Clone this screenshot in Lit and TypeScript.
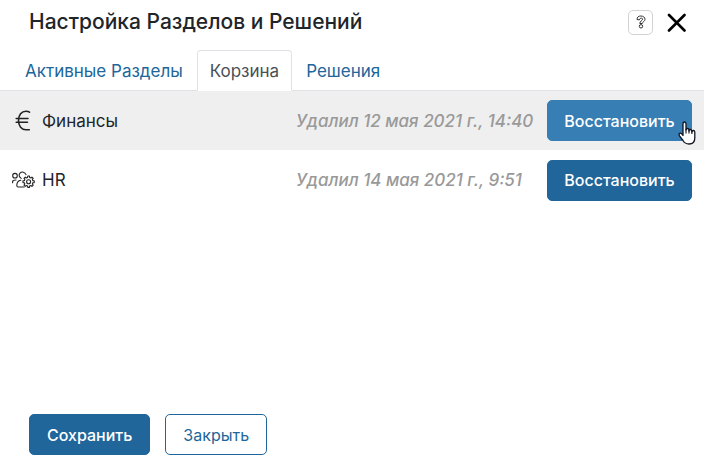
import { LitElement, html, svg, css } from "lit";
import { customElement, state } from "lit/decorators.js";
import { classMap } from "lit/directives/class-map.js";

interface Removed {
  icon: "euro" | "team";
  name: string;
  note: string;
}

/** Closed outline of a cog with rounded teeth. */
function cog(cx: number, cy: number, outer: number, inner: number, teeth: number): string {
  const step = (Math.PI * 2) / teeth;
  const at = (r: number, a: number) => `${(cx + r * Math.sin(a)).toFixed(2)} ${(cy - r * Math.cos(a)).toFixed(2)}`;
  const parts: string[] = [];
  for (let i = 0; i < teeth; i++) {
    const a = i * step;
    parts.push(at(inner, a - step * 0.3), at(outer, a - step * 0.2), at(outer, a + step * 0.2), at(inner, a + step * 0.3));
  }
  return `M${parts.join("L")}Z`;
}

const euro = svg`<path d="M17.500 3.200C16.500 2.500 15.300 2.300 14 2.300C9.500 2.300 6.500 6 6.500 11.500S9.500 20.700 14 20.700H17.300M4.200 9.500H16M4.200 13.300H15.500" fill="none" stroke="currentColor" stroke-width="1.600" stroke-linecap="round"/>`;

const team = svg`<g fill="none" stroke="currentColor" stroke-width="1.100" stroke-linecap="round" stroke-linejoin="round">
  <circle cx="3" cy="7.700" r="2.300"/>
  <path d="M.600 14.800V13.800C.600 12.300 1.600 12 4 12"/>
  <path d="M9.200 10.400C7 9 6.500 7 8 5.200C9.900 3.200 13 4 14 6.600"/>
  <path d="M8.800 12.300C6 12.700 4.800 14.500 4.800 17.500Q4.800 19 6.200 19H12.200"/>
  <path d=${cog(16.6, 13.7, 5.7, 4.4, 8)}/>
  <circle cx="16.600" cy="13.700" r="2"/>
</g>`;

@customElement("app-root")
export class AppRoot extends LitElement {
  static styles = css`
    :host {
      display: flex;
      flex-direction: column;
      min-height: 100vh;
      box-sizing: border-box;
      background: #fff;
      color: #212529;
      font: 17px/24px Inter, "Liberation Sans", sans-serif;
    }
    * { box-sizing: border-box; }
    svg { display: block; flex: none; }
    header {
      display: flex;
      align-items: center;
      justify-content: space-between;
      height: 50px;
      padding: 0 16px 6px 29px;
    }
    h1 { margin: 0; font-size: 21px; line-height: 28px; font-weight: 500; }
    .tools { display: flex; align-items: center; gap: 13px; }
    button { font: inherit; cursor: pointer; }
    .help, .close { display: grid; place-items: center; padding: 0; background: none; }
    .help { width: 25px; height: 25px; border: 1px solid #d2d2d2; border-radius: 5px; color: #333; }
    .close { width: 22px; height: 24px; border: 0; color: #000; }
    nav { display: flex; gap: 1px; padding: 0 12px; border-bottom: 1px solid #dee2e6; }
    nav a {
      height: 41px;
      margin-bottom: -1px;
      padding: 8px 12px;
      border: 1px solid transparent;
      border-radius: 4px 4px 0 0;
      color: #20669b;
      text-decoration: none;
    }
    nav .active { color: #495057; background: #fff; border-color: #dee2e6 #dee2e6 #fff; }
    ul { list-style: none; margin: 0; padding: 0; flex: 1; }
    li { display: flex; align-items: center; height: 60px; padding: 0 12px; }
    li.hovered { background: #efefef; height: 59px; }
    .icon { width: 30px; color: #222; }
    .name { flex: 1; }
    .note { width: 251px; color: #999; font-style: italic; font-weight: 500; }
    .btn {
      height: 41px;
      padding: 0 17px;
      border: 1px solid #20669b;
      border-radius: 5px;
      background: #20669b;
      color: #fff;
      font-size: 16px;
      font-weight: 500;
    }
    .restore { position: relative; width: 145px; padding: 0; }
    .hovered .restore { background: #377eb4; border-color: #377eb4; }
    .pointer { position: absolute; right: -5px; bottom: -5px; }
    footer { display: flex; gap: 15px; padding: 0 29px 7px; }
    .outline { background: #fff; color: #20669b; font-weight: 400; }
  `;

  @state() private tab = 1;
  private tabs = ["Активные Разделы", "Корзина", "Решения"];
  private items: Removed[] = [
    { icon: "euro", name: "Финансы", note: "Удалил 12 мая 2021 г., 14:40" },
    { icon: "team", name: "HR", note: "Удалил 14 мая 2021 г., 9:51" },
  ];

  private select(event: Event, index: number) {
    event.preventDefault();
    this.tab = index;
  }

  private pointer() {
    return html`<svg class="pointer" width="18" height="24" viewBox="0 0 18 24" aria-hidden="true">
      <path d="M5 14.500V3Q5 1 6.500 1T8 3V9Q8 7.500 9.500 7.500T11 9V10Q11 8.500 12.300 8.500T13.800 10V11Q14 9.500 15.300 9.500T16.800 11V17Q16.800 23 11 23Q7 23 5 19.500L1.500 14.800Q.5 13 1.800 12.300T5 14.500Z" fill="#fff" stroke="#111322" stroke-width="1.300" stroke-linejoin="round"/>
      <path d="M8 8V12.500M11 9V12.500M13.900 10V13" stroke="#111322" stroke-width="1.100"/>
    </svg>`;
  }

  render() {
    return html`
      <header>
        <h1>Настройка Разделов и Решений</h1>
        <div class="tools">
          <button class="help" aria-label="Справка">
            <svg width="12" height="14" viewBox="0 0 12 14" fill="none" stroke="currentColor" stroke-width="1">
              <path d="M2 4.500C2 2 3.600 1 5.900 1S10 2.300 10 4.300C10 6.500 7.500 6.700 7.300 8.500H4.800C4.800 6 7.600 5.700 7.600 4.200C7.600 2.700 4.600 2.800 4.300 4.900Z"/>
              <circle cx="6" cy="11.300" r="1.700"/>
            </svg>
          </button>
          <button class="close" aria-label="Закрыть окно">
            <svg width="20" height="20" viewBox="0 0 20 20"><path d="M2 3L17.500 18.500M17.500 3L2 18.500" stroke="currentColor" stroke-width="2.600" stroke-linecap="round"/></svg>
          </button>
        </div>
      </header>
      <nav>
        ${this.tabs.map((label, i) => html`<a href="#" class=${classMap({ active: i === this.tab })} @click=${(e: Event) => this.select(e, i)}>${label}</a>`)}
      </nav>
      <ul>
        ${this.items.map((item, i) => html`
          <li class=${classMap({ hovered: i === 0 })}>
            <span class="icon"><svg width="23" height="24" viewBox="0 0 23 24" aria-hidden="true">${item.icon === "euro" ? euro : team}</svg></span>
            <span class="name">${item.name}</span>
            <span class="note">${item.note}</span>
            <button class="btn restore">Восстановить${i === 0 ? this.pointer() : ""}</button>
          </li>`)}
      </ul>
      <footer>
        <button class="btn">Сохранить</button>
        <button class="btn outline">Закрыть</button>
      </footer>`;
  }
}
